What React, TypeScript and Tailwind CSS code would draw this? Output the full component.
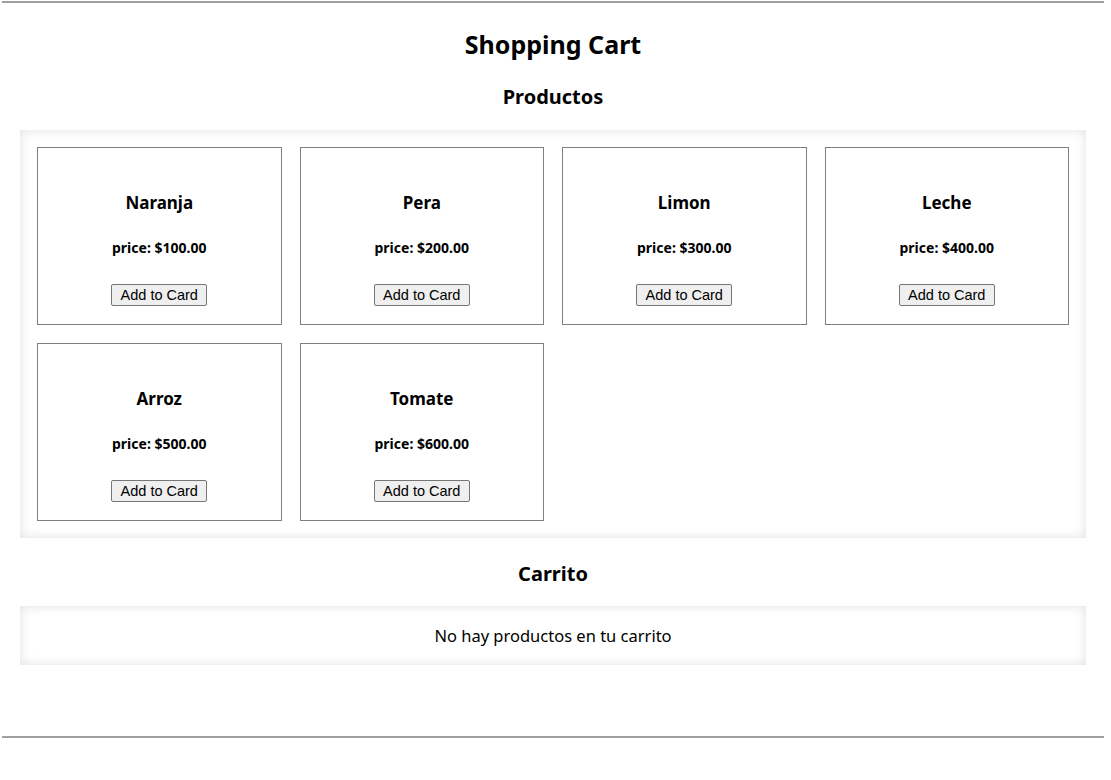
import React from 'react';

const products = [
  { name: 'Naranja', price: 100 },
  { name: 'Pera', price: 200 },
  { name: 'Limon', price: 300 },
  { name: 'Leche', price: 400 },
  { name: 'Arroz', price: 500 },
  { name: 'Tomate', price: 600 },
];

function ProductCard({ name, price }: { name: string; price: number }) {
  return (
    <div className="h-[178px] border border-[#808080] flex flex-col items-center pt-[43px]">
      <h3 className="text-[17px] leading-[24px] font-bold">{name}</h3>
      <p className="mt-[23px] text-[14px] leading-[20px] font-bold">price: ${price.toFixed(2)}</p>
      <button className="mt-[26px] h-[22px] w-[96px] border border-[#767676] rounded-[2px] bg-[#efefef] text-[14.5px] leading-[16px] text-black font-['Liberation_Sans',Arial,sans-serif]">
        Add to Card
      </button>
    </div>
  );
}

export default function App() {
  return (
    <div className="w-[1106px] min-h-[780px] bg-white text-black font-['Noto_Sans',sans-serif]">
      <div className="mx-[2px] pt-[1px]">
        <hr className="border-0 border-t-2 border-[#a0a0a0]" />
      </div>
      <div className="px-[20px]">
        <h1 className="mt-[25px] text-center text-[25px] leading-[32px] font-bold">Shopping Cart</h1>
        <h2 className="mt-[23px] text-center text-[20px] leading-[28px] font-bold">Productos</h2>
        <div className="mt-[19px] p-[17px] shadow-[inset_0_0_12px_rgba(0,0,0,0.12)] grid grid-cols-4 gap-[18px]">
          {products.map((p) => (
            <ProductCard key={p.name} name={p.name} price={p.price} />
          ))}
        </div>
        <h2 className="mt-[22px] text-center text-[20px] leading-[28px] font-bold">Carrito</h2>
        <div className="mt-[18px] h-[59px] flex items-center justify-center shadow-[inset_0_0_12px_rgba(0,0,0,0.12)]">
          <p className="text-[16.5px] leading-[24px]">No hay productos en tu carrito</p>
        </div>
      </div>
      <div className="mx-[2px] mt-[71px]">
        <hr className="border-0 border-t-2 border-[#a0a0a0]" />
      </div>
    </div>
  );
}
